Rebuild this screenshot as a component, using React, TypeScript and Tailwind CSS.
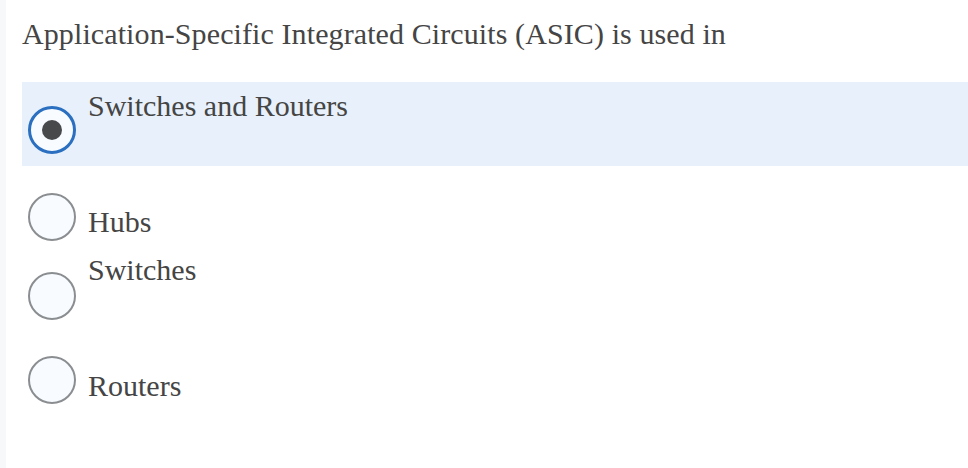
import React from "react";

type Option = {
  label: string;
  selected?: boolean;
  rowClass: string;
  radioClass: string;
  textClass: string;
};

const options: Option[] = [
  {
    label: "Switches and Routers",
    selected: true,
    rowClass: "h-[84px] bg-[#e8f1fb]",
    radioClass: "mt-[24px]",
    textClass: "mt-[8px]",
  },
  { label: "Hubs", rowClass: "h-[84px]", radioClass: "mt-[27px]", textClass: "mt-[40px]" },
  { label: "Switches", rowClass: "h-[84px]", radioClass: "mt-[22px]", textClass: "mt-[4px]" },
  { label: "Routers", rowClass: "h-[84px]", radioClass: "mt-[22px]", textClass: "mt-[36px]" },
];

function Radio({ selected }: { selected?: boolean }) {
  if (selected) {
    return (
      <div className="flex h-[48px] w-[48px] shrink-0 items-center justify-center rounded-full border-[3px] border-[#2a6fc0] bg-[#f8fbff]">
        <div className="h-[20px] w-[20px] rounded-full bg-[#48494b]" />
      </div>
    );
  }
  return (
    <div className="h-[48px] w-[48px] shrink-0 rounded-full border-2 border-[#8b8e91] bg-[#f8fbff]" />
  );
}

export default function App() {
  return (
    <div className="flex h-[468px] w-[968px] bg-white font-['Liberation_Serif',serif] text-[#454545]">
      <div className="w-[6px] shrink-0 bg-[#f7f8f9]" />
      <div className="flex flex-1 flex-col pl-[16px]">
        <h1 className="pt-[18px] text-[30px] leading-[32px] tracking-[0.1px]">
          Application-Specific Integrated Circuits (ASIC) is used in
        </h1>
        <div className="mt-[32px] flex flex-col">
          {options.map((o) => (
            <label key={o.label} className={`flex items-start ${o.rowClass}`}>
              <div className={`ml-[6px] ${o.radioClass}`}>
                <Radio selected={o.selected} />
              </div>
              <span className={`ml-[12px] text-[30px] leading-[32px] ${o.textClass}`}>
                {o.label}
              </span>
            </label>
          ))}
        </div>
      </div>
    </div>
  );
}
